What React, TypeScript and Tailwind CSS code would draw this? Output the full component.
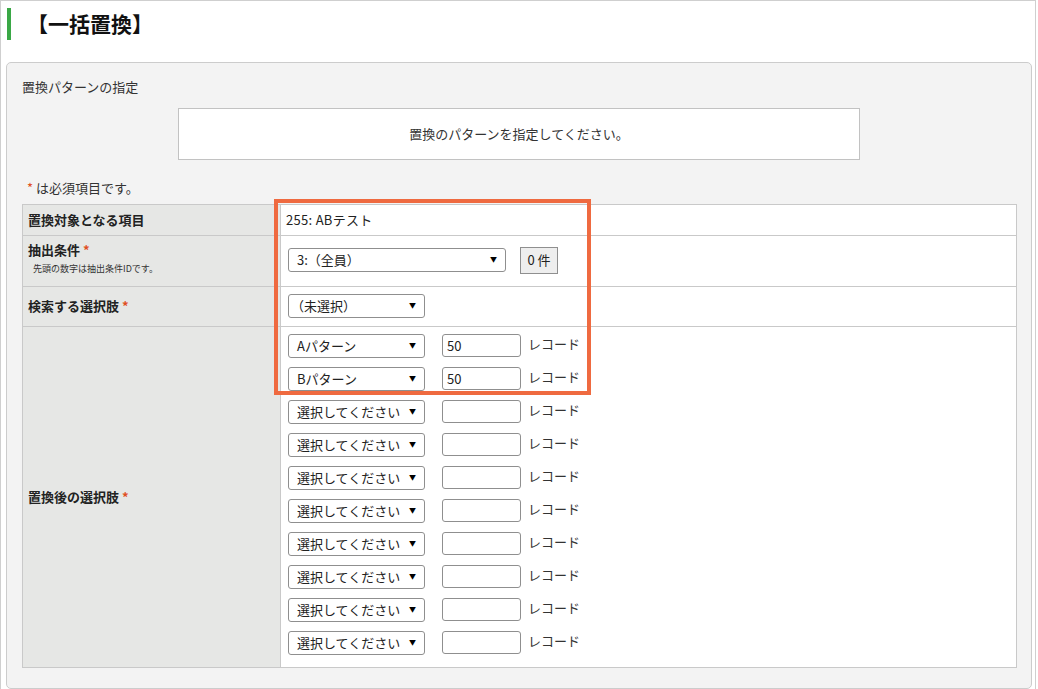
import React from "react";

const font = { fontFamily: '"Noto Sans CJK JP", "Noto Sans", sans-serif' };

function Sel({ w, text, pad = "pl-[8px]" }: { w: string; text: string; pad?: string }) {
  return (
    <div
      className={`relative flex h-[24px] items-center rounded-[3px] border border-[#8f8f8f] bg-white ${pad} text-[13px] text-[#222] ${w}`}
    >
      <span className="leading-none">{text}</span>
      <span className="absolute right-[8px] top-[7px] text-[7px] leading-none text-black">▼</span>
    </div>
  );
}

function RecRow({ label, val }: { label: string; val: string }) {
  return (
    <div className="flex h-[24px] items-center">
      <Sel w="w-[137px]" text={label} />
      <div className="ml-[17px] flex h-[23px] w-[79px] items-center rounded-[3px] border border-[#8f8f8f] bg-white pl-[4px] text-[13px] text-[#222]">
        {val}
      </div>
      <span className="ml-[7px] -mt-[3px] text-[13px] text-[#333]">レコード</span>
    </div>
  );
}

export default function App() {
  const empties = Array.from({ length: 8 });
  return (
    <div className="h-[689px] w-[1038px] overflow-hidden bg-white" style={font}>
      <div className="relative h-[700px] w-[1036px] border border-[#cfcfcf] bg-white">
        <div className="flex h-[61px] items-start pt-[7px]">
          <div className="ml-[6px] h-[32px] w-[4px] bg-[#3aa846]" />
          <h1 className="ml-[16px] mt-[1px] text-[21px] font-bold leading-[28px] text-[#111]">【一括置換】</h1>
        </div>
        <div className="ml-[5px] w-[1026px] rounded-[5px] border border-[#cccccc] bg-[#f3f3f3] pb-[20px]">
          <div className="pl-[15px] pt-[14px] text-[13px] text-[#333]">置換パターンの指定</div>
          <div className="ml-[171px] mt-[11px] flex h-[52px] w-[682px] items-center justify-center border border-[#c2c2c2] bg-white text-[13px] text-[#333]">
            置換のパターンを指定してください。
          </div>
          <div className="pl-[20px] pt-[19px] text-[13px] leading-[18px] text-[#333]">
            <span className="text-[#e0501f]">*</span> は必須項目です。
          </div>
          <div className="relative ml-[15px] mt-[7px] w-[995px]">
            <div className="border border-[#c9c9c9] bg-white">
              <div className="flex h-[31px] border-b border-[#c9c9c9]">
                <div className="flex w-[258px] items-center border-r border-[#c9c9c9] bg-[#e6e7e5] pl-[5px] text-[13px] font-bold text-[#222]">
                  置換対象となる項目
                </div>
                <div className="flex flex-1 items-center pl-[5px] text-[13px] tracking-[0.3px] text-[#222]">255: ABテスト</div>
              </div>
              <div className="flex h-[51px] border-b border-[#c9c9c9]">
                <div className="flex w-[258px] flex-col border-r border-[#c9c9c9] bg-[#e6e7e5] pl-[5px] pt-[4px]">
                  <span className="text-[13px] font-bold leading-[20px] text-[#222]">
                    抽出条件 <span className="text-[#e0501f]">*</span>
                  </span>
                  <span className="mt-[2px] pl-[5px] text-[9px] leading-[14px] text-[#333]">先頭の数字は抽出条件IDです。</span>
                </div>
                <div className="flex flex-1 items-start pl-[7px] pt-[12px]">
                  <Sel w="w-[218px]" text="3:（全員）" />
                  <div className="-mt-[1px] ml-[14px] flex h-[27px] w-[38px] items-center justify-center border border-[#8f8f8f] bg-[#eeeeee] text-[13px] text-[#222]">
                    0 件
                  </div>
                </div>
              </div>
              <div className="flex h-[40px] border-b border-[#c9c9c9]">
                <div className="flex w-[258px] items-center border-r border-[#c9c9c9] bg-[#e6e7e5] pl-[5px] text-[13px] font-bold text-[#222]">
                  検索する選択肢&nbsp;<span className="text-[#e0501f]">*</span>
                </div>
                <div className="flex flex-1 items-start pl-[7px] pt-[7px]">
                  <Sel w="w-[137px]" text="（未選択）" pad="pl-[2px]" />
                </div>
              </div>
              <div className="flex h-[340px]">
                <div className="flex w-[258px] items-center border-r border-[#c9c9c9] bg-[#e6e7e5] pl-[5px] text-[13px] font-bold text-[#222]">
                  置換後の選択肢&nbsp;<span className="text-[#e0501f]">*</span>
                </div>
                <div className="flex flex-1 flex-col gap-[9px] pl-[7px] pt-[7px]">
                  <RecRow label="Aパターン" val="50" />
                  <RecRow label="Bパターン" val="50" />
                  {empties.map((_, i) => (
                    <RecRow key={i} label="選択してください" val="" />
                  ))}
                </div>
              </div>
            </div>
            <div className="pointer-events-none absolute left-[252px] top-[-5px] h-[196px] w-[317px] border-[4px] border-[#ef6a40]" />
          </div>
        </div>
      </div>
    </div>
  );
}
